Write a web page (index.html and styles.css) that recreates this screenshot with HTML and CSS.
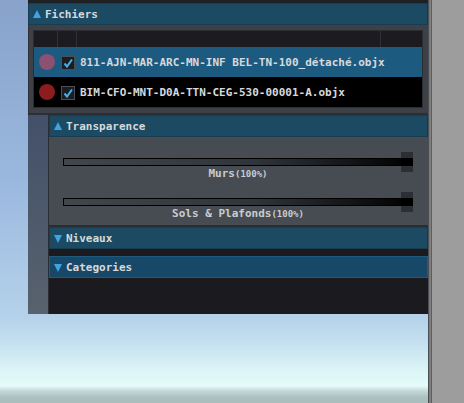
FILE: index.html
```html
<!DOCTYPE html>
<html lang="fr">
<head>
    <meta charset="UTF-8">
    <title>Inspecteur de maquette</title>
    <link rel="stylesheet" href="styles.css">
</head>
<body>
    <div class="screen">
        <div class="inspector">
            <!-- Liste des fichiers chargés -->
            <div class="fold">
                <span class="arrow-up"></span>
                <span>Fichiers</span>
            </div>
            <div class="group-body">
                <div class="file-list">
                    <div class="list-head">
                        <span class="col-color"></span>
                        <span class="col-check"></span>
                        <span class="col-name"></span>
                        <span class="col-extra"></span>
                    </div>
                    <div class="file-row selected">
                        <span class="dot dot-mauve"></span>
                        <span class="check">
                            <svg width="12" height="12" viewBox="0 0 12 12"><polyline points="2.5,6.5 5,9.5 10,2.5" fill="none" stroke="#49aee6" stroke-width="2"/></svg>
                        </span>
                        <span class="file-name">811-AJN-MAR-ARC-MN-INF BEL-TN-100_détaché.objx</span>
                    </div>
                    <div class="file-row">
                        <span class="dot dot-red"></span>
                        <span class="check">
                            <svg width="12" height="12" viewBox="0 0 12 12"><polyline points="2.5,6.5 5,9.5 10,2.5" fill="none" stroke="#49aee6" stroke-width="2"/></svg>
                        </span>
                        <span class="file-name">BIM-CFO-MNT-D0A-TTN-CEG-530-00001-A.objx</span>
                    </div>
                </div>
            </div>

            <div class="nested">
                <div class="indent"></div>
                <div class="nested-col">
                    <div class="fold">
                        <span class="arrow-up"></span>
                        <span>Transparence</span>
                    </div>
                    <div class="sliders">
                        <div class="slider">
                            <div class="track"></div>
                            <div class="handle"></div>
                        </div>
                        <div class="slider-label">Murs<small>(100%)</small></div>
                        <div class="slider">
                            <div class="track"></div>
                            <div class="handle"></div>
                        </div>
                        <div class="slider-label">Sols &amp; Plafonds<small>(100%)</small></div>
                    </div>
                    <div class="fold">
                        <span class="arrow-down"></span>
                        <span>Niveaux</span>
                    </div>
                    <div class="spacer"></div>
                    <div class="fold fold-focus">
                        <span class="arrow-down"></span>
                        <span>Categories</span>
                    </div>
                    <div class="empty-area"></div>
                </div>
            </div>
        </div>
        <div class="splitter"></div>
        <div class="side"></div>
    </div>
</body>
</html>
```

FILE: styles.css
```css
body {
    margin: 0;
    height: 403px;
    overflow: hidden;
    font-family: "DejaVu Sans Mono", "Liberation Mono", monospace;
    font-size: 11px;
    font-weight: bold;
    color: #d6d9dc;
    background: linear-gradient(to bottom, #88a2ca 0, #9ab8de 180px, #b5d2ea 318px, #c6e2f0 345px, #dcf4f6 370px, #e4fbfa 386px, #c4d8d8 391px, #adc1c0 397px, #a9bdbc 403px);
}
.screen {
    display: flex;
    align-items: flex-start;
    height: 403px;
}
.inspector {
    width: 400px;
    margin-left: 28px;
    border-top: 3px solid #1e2024;
    display: flex;
    flex-direction: column;
}
/* En-têtes repliables */
.fold {
    height: 22px;
    box-sizing: border-box;
    display: flex;
    align-items: center;
    gap: 4px;
    padding-left: 4px;
    background: #1b4a62;
    border: 1px solid #173d52;
    border-right-color: #2c3036;
}
.fold-focus {
    background: #174868;
    border-color: #1f5b80;
}
.arrow-up {
    width: 0;
    height: 0;
    border-left: 4.5px solid transparent;
    border-right: 4.5px solid transparent;
    border-bottom: 8px solid #3ea3e2;
}
.arrow-down {
    width: 0;
    height: 0;
    margin-top: 1px;
    border-left: 4.5px solid transparent;
    border-right: 4.5px solid transparent;
    border-top: 8px solid #3ea3e2;
}
.group-body {
    background: #3d4147;
    padding: 5px;
    border-left: 1px solid #2e3238;
    border-bottom: 2px solid #2b2e33;
}
.file-list {
    border: 1px solid #2a2d32;
    margin-left: -1px;
}
.list-head {
    display: flex;
    height: 16px;
    background: #1b1b20;
}
.list-head span {
    border-right: 1px solid #2f3238;
}
.col-color { width: 23px; }
.col-check { width: 18px; }
.col-name { flex: 1; }
.col-extra { width: 41px; border-right: none !important; }
.file-row {
    height: 30px;
    display: flex;
    align-items: center;
    background: #000;
}
.file-row.selected {
    background: #1d5a80;
}
.dot {
    width: 16px;
    height: 16px;
    border-radius: 50%;
    margin-left: 5px;
}
.dot-mauve { background: #8b5072; }
.dot-red { background: #8c1c1d; }
.check {
    width: 14px;
    height: 14px;
    box-sizing: border-box;
    margin-left: 6px;
    margin-top: 2px;
    background: #1b1d22;
    border: 1px solid #4a4e55;
    display: flex;
    align-items: center;
    justify-content: center;
}
.file-name {
    margin-left: 5px;
    white-space: nowrap;
}
/* Bloc imbriqué */
.nested {
    display: flex;
}
.indent {
    width: 20px;
    background: linear-gradient(to bottom, #435069, #58626e);
}
.nested-col {
    flex: 1;
    display: flex;
    flex-direction: column;
    border-left: 1px solid #2a2e34;
}
.sliders {
    background: #474c52;
    padding: 15px 15px 5px 14px;
    border-bottom: 2px solid #2a2d31;
    display: flex;
    flex-direction: column;
}
.slider {
    height: 20px;
    display: flex;
    align-items: center;
    position: relative;
}
.track {
    flex: 1;
    height: 8px;
    box-sizing: border-box;
    border: 1px solid #000;
    background: linear-gradient(to right, #41474d, #30353b 55%, #000);
}
.handle {
    position: absolute;
    right: 0;
    top: 0;
    width: 12px;
    height: 20px;
    background: linear-gradient(to bottom, #2c3034 6px, #000 6px, #000 14px, #2c3034 14px);
}
.slider-label {
    height: 13px;
    text-align: center;
    line-height: 13px;
    margin-top: -5px;
    margin-bottom: 12px;
    color: #c9cdd1;
}
.slider-label:last-child {
    margin-bottom: 0;
}
.slider-label small {
    font-size: 9px;
    line-height: 0;
}
.spacer {
    height: 7px;
    background: #1b1b1f;
}
.empty-area {
    height: 36px;
    background: #1b1b1f;
}
.splitter {
    width: 4px;
    height: 403px;
    background: linear-gradient(to right, #4c4f54 0, #4c4f54 1px, #767676 1px, #828282 3px, #5e5e5e 3px);
}
.side {
    flex: 1;
    height: 403px;
    background: #9d9d9d;
}
```
